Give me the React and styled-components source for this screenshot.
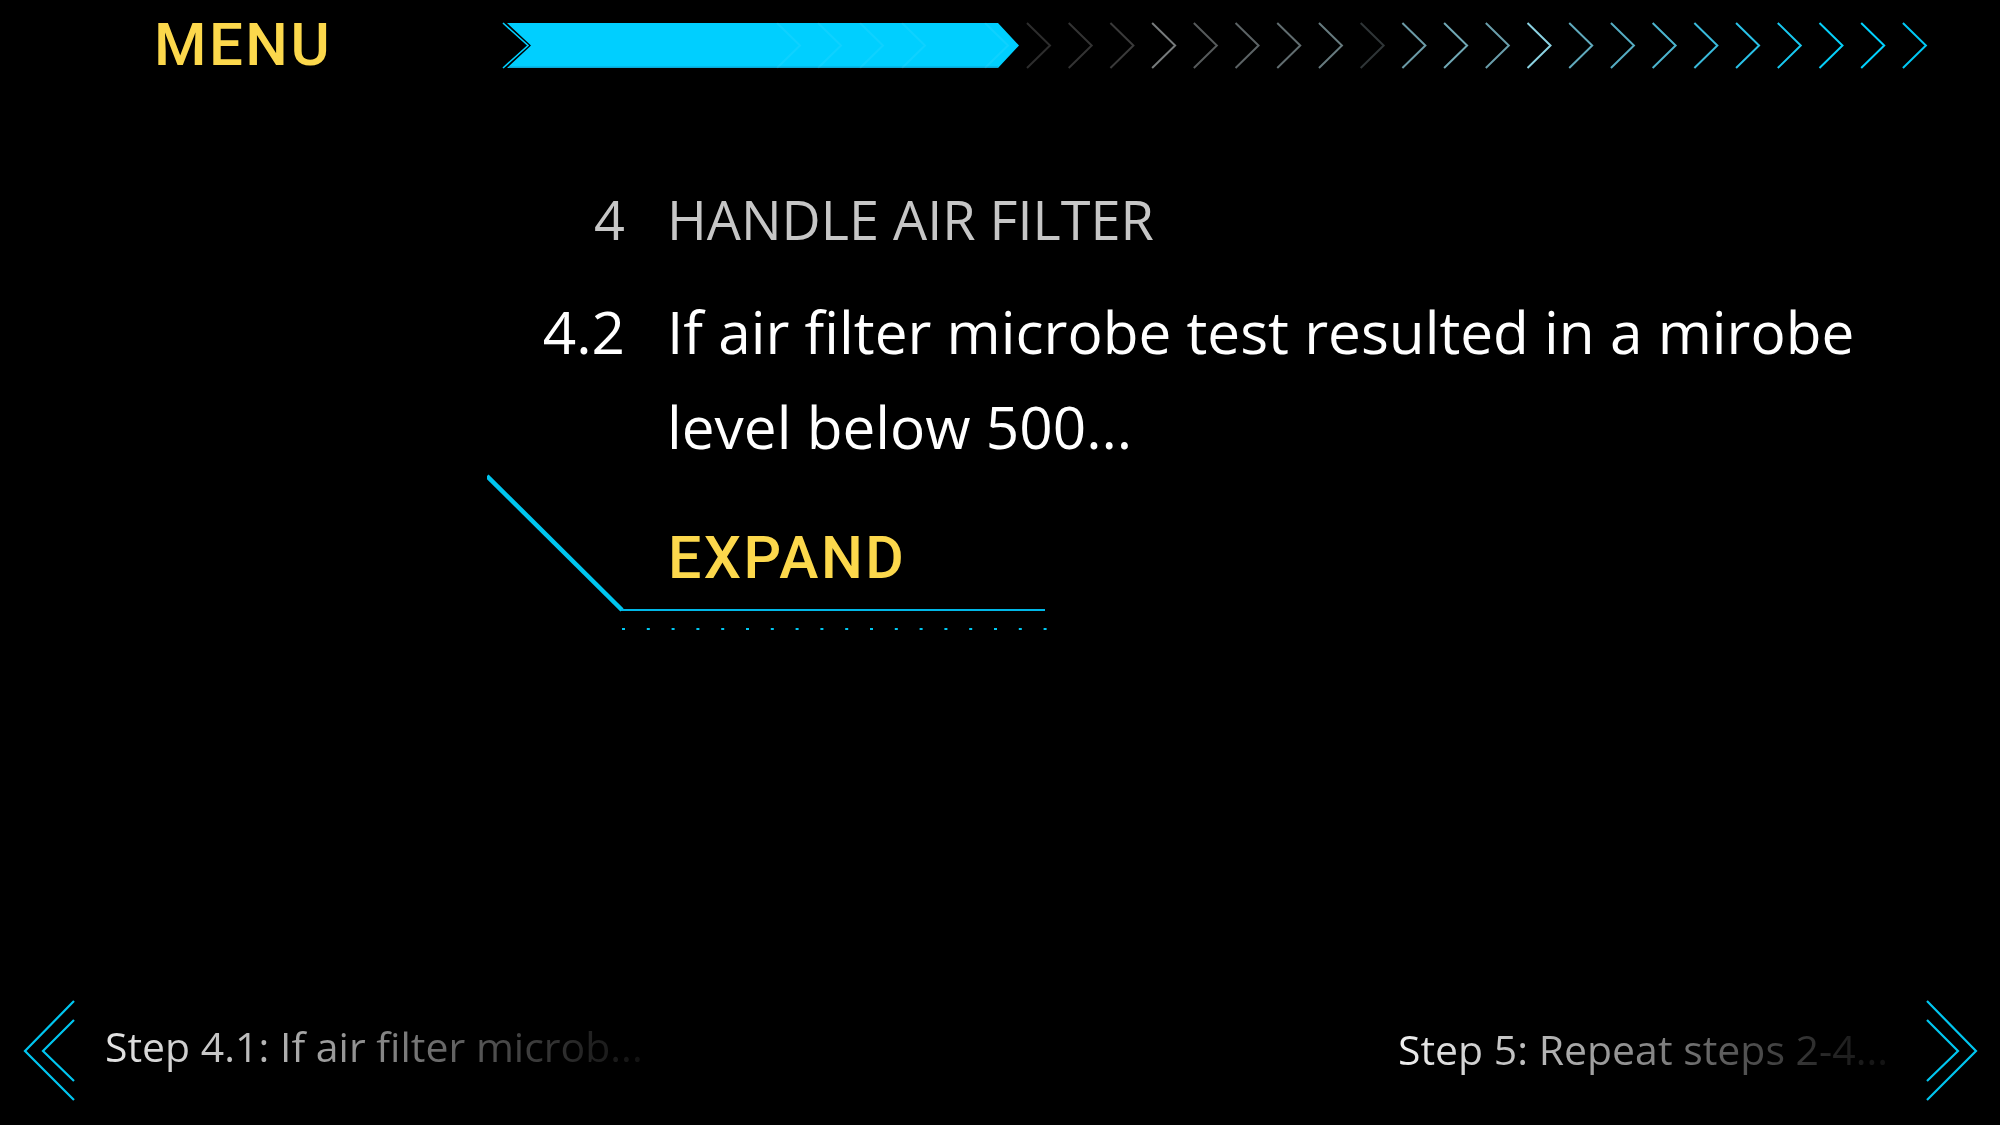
import React from "react";
import styled, { createGlobalStyle } from "styled-components";

const cyan = "#00cfff";
const lineCyan = "#00c6f0";
const yellow = "#fcd84c";

// colours of the outline chevrons after the filled part, left to right
const chevronColors = [
  "#2d2d2d", "#333333", "#3a3a3a", "#777b7c", "#565a5b", "#5c6365",
  "#616d70", "#667a7e", "#2f3537", "#6b9aa6", "#70a8b5", "#6a9eab",
  "#8bd2e2", "#60aabd", "#55acc2", "#4cb4ce", "#3abadb", "#2ac2e8",
  "#18c9f1", "#06d0fa", "#00d2ff", "#00c8f4",
];

const GlobalStyle = createGlobalStyle`
  html, body {
    margin: 0;
    padding: 0;
    background: #000;
  }
  body {
    font-family: "Open Sans", "Noto Sans", sans-serif;
    color: #fff;
  }
`;

export default function App() {
  return (
    <>
      <GlobalStyle />
      <Screen>
        <Header>
          <MenuButton>MENU</MenuButton>
          <Progress />
        </Header>

        <Main>
          <StepGrid>
            <Num $title>4</Num>
            <Title>HANDLE AIR FILTER</Title>
            <Num>4.2</Num>
            <Body>
              If air filter microbe test resulted in a mirobe level below 500...
            </Body>
          </StepGrid>
          <ExpandButton>
            <Frame width="560" height="160" viewBox="0 0 560 160">
              <polyline
                points="0,2 135,136"
                fill="none"
                stroke={lineCyan}
                strokeWidth="4.5"
              />
              <line x1="134" y1="136" x2="558" y2="136" stroke="#00b8e8" strokeWidth="2.2" />
              {Array.from({ length: 18 }).map((_, i) => (
                <rect key={i} x={135 + i * 24.8} y="154" width="3" height="2" fill={lineCyan} />
              ))}
            </Frame>
            <ExpandLabel>EXPAND</ExpandLabel>
          </ExpandButton>
        </Main>

        <Footer>
          <NavLink $gap={28}>
            <svg width="54" height="101" viewBox="0 0 54 101">
              <polyline points="51,1 2,51 51,100" fill="none" stroke={lineCyan} strokeWidth="2.2" />
              <polyline points="51,20 20,51 51,81" fill="none" stroke={lineCyan} strokeWidth="2.2" />
            </svg>
            <NavText $lift={10} $from="#e4e4e4">Step 4.1: If air filter microb...</NavText>
          </NavLink>
          <NavLink $gap={36}>
            <NavText $lift={4} $from="#f0f0f0">Step 5: Repeat steps 2-4...</NavText>
            <svg width="54" height="101" viewBox="0 0 54 101">
              <polyline points="3,1 52,51 3,100" fill="none" stroke={lineCyan} strokeWidth="2.2" />
              <polyline points="3,20 34,51 3,81" fill="none" stroke={lineCyan} strokeWidth="2.2" />
            </svg>
          </NavLink>
        </Footer>
      </Screen>
    </>
  );
}

function Progress() {
  const step = 41.71;
  const faint = [300, 341, 383, 425, 508];
  return (
    <ProgressSvg width="1440" height="50" viewBox="0 0 1440 50">
      <polyline points="3,2 28,24.5 3,47" fill="none" stroke={cyan} strokeWidth="1.6" />
      <polygon points="7,2 498,2 519,24.5 498,47 7,47 31,24.5" fill={cyan} />
      <line x1="9" y1="46.3" x2="498" y2="46.3" stroke="#0aa8d8" strokeWidth="1.4" />
      {faint.map((x) => (
        <polyline
          key={x}
          points={`${x - 23},2 ${x},24.5 ${x - 23},47`}
          fill="none"
          stroke="rgba(255,255,255,0.06)"
          strokeWidth="2"
        />
      ))}
      {chevronColors.map((c, i) => {
        const x = 527 + i * step;
        return (
          <polyline
            key={i}
            points={`${x},2 ${x + 23},24.5 ${x},47`}
            fill="none"
            stroke={c}
            strokeWidth="2"
          />
        );
      })}
    </ProgressSvg>
  );
}

const Screen = styled.div`
  width: 2000px;
  height: 1125px;
  background: #000;
  display: flex;
  flex-direction: column;
  overflow: hidden;
`;

const Header = styled.header`
  height: 89px;
  display: grid;
  grid-template-columns: 500px 1fr;
  align-items: center;
`;

const MenuButton = styled.div`
  padding-left: 154px;
  font-family: Roboto, "Liberation Sans", sans-serif;
  font-weight: 500;
  font-size: 60px;
  line-height: 1;
  color: ${yellow};
  letter-spacing: 2.5px;
`;

const ProgressSvg = styled.svg`
  display: block;
  margin-top: 3px;
`;

const Main = styled.main`
  padding-top: 98px;
  padding-left: 487px;
  display: flex;
  flex-direction: column;
`;

const StepGrid = styled.div`
  display: grid;
  grid-template-columns: 138px 1260px;
  column-gap: 42px;
  row-gap: 32px;
`;

const Num = styled.div`
  text-align: right;
  font-size: ${(p) => (p.$title ? "54px" : "58.5px")};
  line-height: ${(p) => (p.$title ? "65px" : "95px")};
  font-weight: 400;
  color: ${(p) => (p.$title ? "#c6c6c6" : "#fff")};
`;

const Title = styled.h1`
  margin: 0;
  font-size: 54px;
  line-height: 65px;
  font-weight: 400;
  color: #c6c6c6;
`;

const Body = styled.p`
  margin: 0;
  font-size: 58.5px;
  line-height: 95px;
  font-weight: 400;
  color: #fff;
`;

const ExpandButton = styled.div`
  position: relative;
  width: 560px;
  height: 160px;
  box-sizing: border-box;
  padding: 54px 0 0 181px;
  cursor: pointer;
`;

const Frame = styled.svg`
  position: absolute;
  left: 0;
  top: 0;
  pointer-events: none;
`;

const ExpandLabel = styled.span`
  position: relative;
  display: block;
  font-family: Roboto, "Liberation Sans", sans-serif;
  font-weight: 500;
  font-size: 59px;
  line-height: 1;
  color: ${yellow};
  letter-spacing: 2.5px;
`;

const Footer = styled.footer`
  margin-top: auto;
  display: flex;
  justify-content: space-between;
  align-items: center;
  padding: 0 22px 24px 23px;
`;

const NavLink = styled.div`
  display: flex;
  align-items: center;
  gap: ${(p) => p.$gap}px;
  cursor: pointer;
  svg {
    display: block;
    flex-shrink: 0;
  }
`;

const NavText = styled.span`
  font-size: 41px;
  font-weight: 400;
  white-space: nowrap;
  margin-bottom: ${(p) => p.$lift}px;
  background: linear-gradient(
    90deg,
    ${(p) => p.$from} 0%,
    #bdbdbd 26%,
    #8a8a8a 50%,
    #4a4a4a 74%,
    #222 90%,
    #111 100%
  );
  -webkit-background-clip: text;
  background-clip: text;
  color: transparent;
`;
